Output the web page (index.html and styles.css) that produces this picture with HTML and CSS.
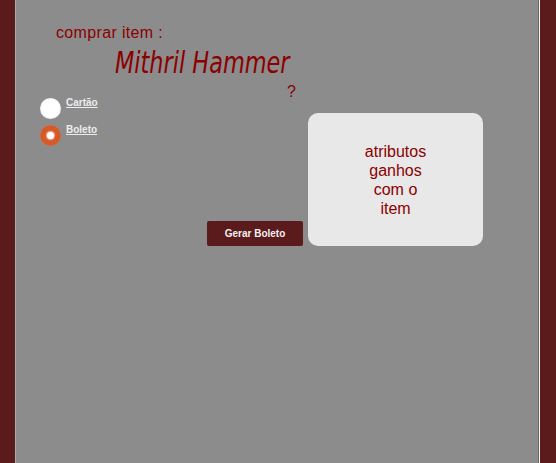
FILE: index.html
```html
<!DOCTYPE html>
<html lang="pt">
<head>
<meta charset="utf-8">
<title>Comprar item</title>
<link rel="stylesheet" href="styles.css">
</head>
<body>
<div class="frame">
  <div class="side side-left"></div>
  <main class="panel">
    <h1 class="title">comprar item :</h1>
    <h2 class="item-name"><span class="item-name-text">Mithril Hammer</span></h2>
    <div class="question">?</div>
    <div class="row">
      <div class="left-col">
        <div class="options">
          <label class="option">
            <span class="radio radio-off"></span>
            <span class="option-label">Cartão</span>
          </label>
          <label class="option">
            <span class="radio radio-on"><span class="dot"></span></span>
            <span class="option-label">Boleto</span>
          </label>
        </div>
        <button class="btn">Gerar Boleto</button>
      </div>
      <div class="attr-box">
        <p class="attr-text">atributos ganhos com o item</p>
      </div>
    </div>
  </main>
  <div class="side side-right"></div>
</div>
</body>
</html>
```
FILE: styles.css
```css
html, body {
  margin: 0;
  padding: 0;
  height: 100%;
}
body {
  font-family: "Liberation Sans", Arial, sans-serif;
  background: #8c8c8c;
}
.frame {
  display: flex;
  height: 100vh;
}
.side {
  background: #5b1a1b;
}
.side-left {
  width: 15px;
}
.side-right {
  width: 16px;
  border-left: 1px solid #f4f4f4;
}
.panel {
  flex: 1;
  background: #8c8c8c;
  border-left: 1px solid #a8a8a8;
  border-right: 1px solid #6c6c6c;
  padding: 24px 0 0 24px;
}
.title {
  margin: 0 0 0 16px;
  font-weight: normal;
  font-size: 16px;
  line-height: 18px;
  letter-spacing: 0.35px;
  color: #8b0000;
}
.item-name {
  margin: 1px 0 0 75px;
  font-weight: normal;
  font-size: 30px;
  line-height: 40px;
  height: 40px;
  color: #8b0000;
}
.item-name-text {
  display: inline-block;
  font-family: "DejaVu Sans Condensed", "Liberation Sans", sans-serif;
  font-style: italic;
  font-weight: 300;
  transform: scaleX(0.83);
  transform-origin: left center;
  white-space: nowrap;
}
.question {
  margin-left: 247px;
  font-size: 16px;
  line-height: 18px;
  color: #8b0000;
}
.row {
  display: flex;
  gap: 5px;
  margin-top: -3px;
}
.left-col {
  width: 263px;
  display: flex;
  flex-direction: column;
}
.options {
  display: flex;
  flex-direction: column;
  gap: 6px;
}
.option {
  display: flex;
  align-items: flex-start;
  gap: 5px;
}
.radio {
  width: 21px;
  height: 21px;
  border-radius: 50%;
  display: flex;
  align-items: center;
  justify-content: center;
}
.radio-off {
  background: radial-gradient(circle, #ffffff 0%, #ffffff 58%, #ececec 76%, #b4b4b4 100%);
}
.radio-on {
  background: radial-gradient(circle, #d9602c 0%, #d35a28 62%, #e0805a 82%, #c79a88 100%);
}
.dot {
  width: 7px;
  height: 7px;
  border-radius: 50%;
  background: #ffffff;
  box-shadow: 0 0 1px 1px rgba(255, 220, 200, 0.7);
}
.option-label {
  margin-top: -1px;
  font-size: 10px;
  line-height: 12px;
  font-weight: bold;
  color: #ececec;
  text-decoration: underline;
}
.btn {
  margin-top: auto;
  align-self: flex-end;
  width: 96px;
  height: 25px;
  border: none;
  border-radius: 2px;
  background: #5b1a1b;
  color: #f0f0f0;
  font-family: "Liberation Sans", Arial, sans-serif;
  font-weight: bold;
  font-size: 10px;
  padding: 0;
}
.attr-box {
  margin-top: 15px;
  width: 175px;
  height: 133px;
  background: #e8e8e8;
  border-radius: 10px;
  display: flex;
  align-items: center;
  justify-content: center;
}
.attr-text {
  margin: 0;
  width: 70px;
  text-align: center;
  font-size: 16px;
  line-height: 19px;
  color: #8b0000;
}
```
